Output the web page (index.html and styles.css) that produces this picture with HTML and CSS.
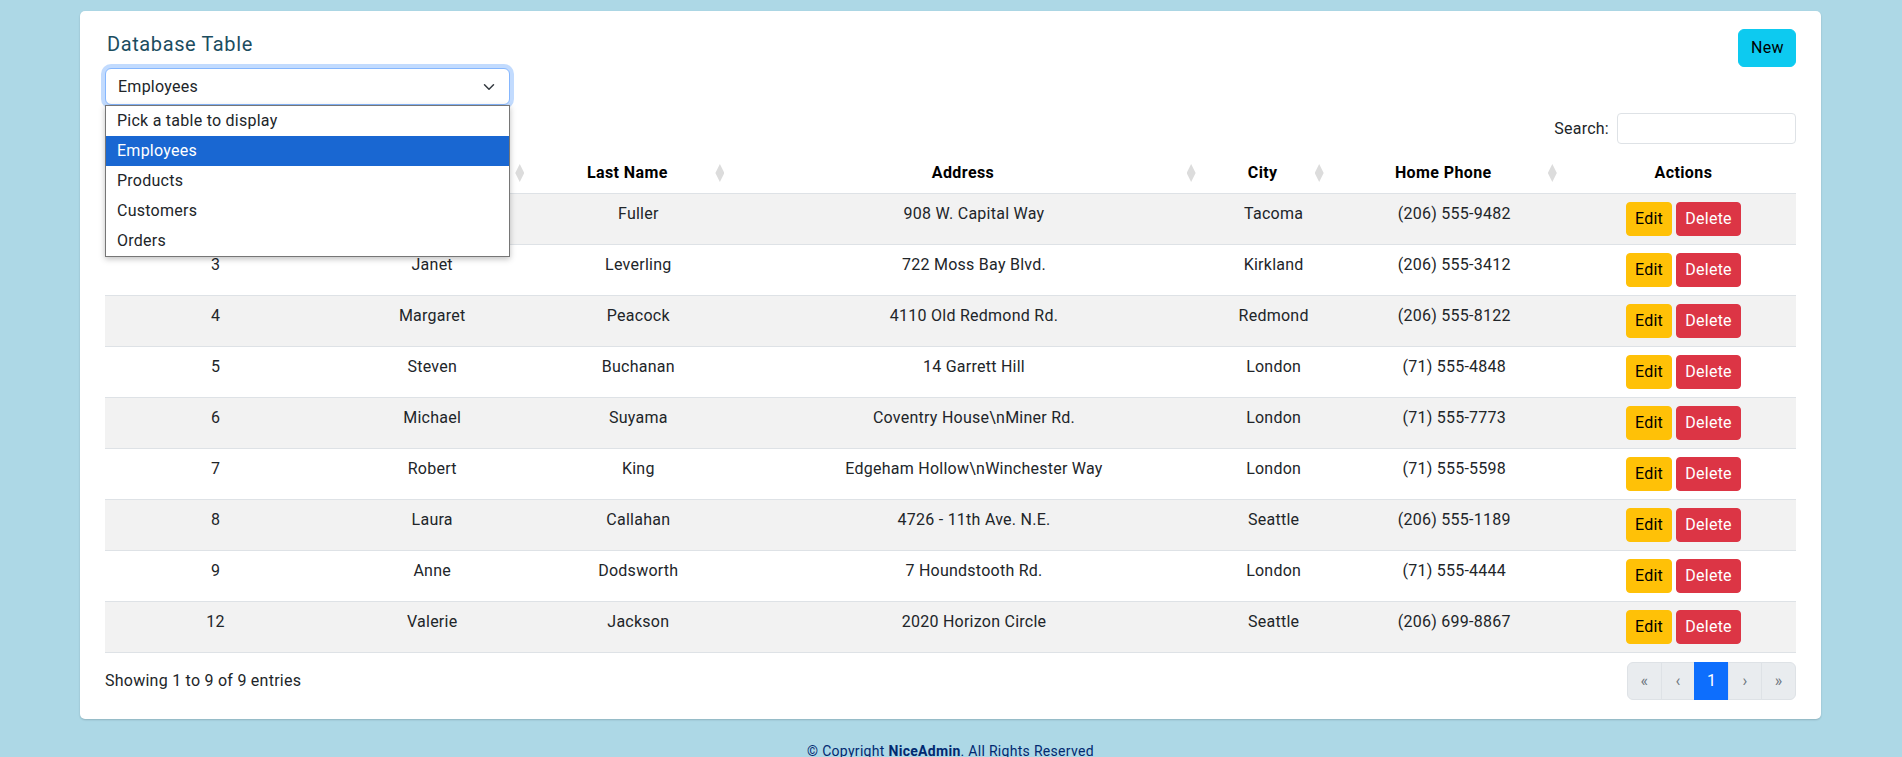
FILE: index.html
```html
<!DOCTYPE html>
<html lang="en">
<head>
<meta charset="utf-8">
<title>Database Table</title>
<link rel="stylesheet" href="styles.css">
</head>
<body>
<main class="main">
  <section class="card">
    <div class="card-head">
      <div class="head-left">
        <h5 class="card-title">Database Table</h5>
        <div class="picker">
          <div class="select">
            <span>Employees</span>
            <svg class="chev" width="16" height="12" viewBox="0 0 16 16"><path d="m2 5 6 6 6-6" fill="none" stroke="#343a40" stroke-width="2" stroke-linecap="round" stroke-linejoin="round"/></svg>
          </div>
          <ul class="options">
            <li>Pick a table to display</li>
            <li class="selected">Employees</li>
            <li>Products</li>
            <li>Customers</li>
            <li>Orders</li>
          </ul>
        </div>
      </div>
      <button class="btn btn-info">New</button>
    </div>

    <div class="dt-top">
      <label class="search-label">Search:</label>
      <input class="search-input" type="search">
    </div>

    <table class="table">
      <colgroup>
        <col class="c1"><col class="c2"><col class="c3"><col class="c4"><col class="c5"><col class="c6"><col class="c7">
      </colgroup>
      <thead>
        <tr>
          <th class="sortable">ID<span class="sort"></span></th>
          <th class="sortable">First Name<span class="sort"></span></th>
          <th class="sortable">Last Name<span class="sort"></span></th>
          <th class="sortable">Address<span class="sort"></span></th>
          <th class="sortable">City<span class="sort"></span></th>
          <th class="sortable">Home Phone<span class="sort"></span></th>
          <th>Actions</th>
        </tr>
      </thead>
      <tbody>
        <tr><td>2</td><td>Andrew</td><td>Fuller</td><td>908 W. Capital Way</td><td>Tacoma</td><td>(206) 555-9482</td><td class="actions"><button class="btn btn-warning">Edit</button> <button class="btn btn-danger">Delete</button></td></tr>
        <tr><td>3</td><td>Janet</td><td>Leverling</td><td>722 Moss Bay Blvd.</td><td>Kirkland</td><td>(206) 555-3412</td><td class="actions"><button class="btn btn-warning">Edit</button> <button class="btn btn-danger">Delete</button></td></tr>
        <tr><td>4</td><td>Margaret</td><td>Peacock</td><td>4110 Old Redmond Rd.</td><td>Redmond</td><td>(206) 555-8122</td><td class="actions"><button class="btn btn-warning">Edit</button> <button class="btn btn-danger">Delete</button></td></tr>
        <tr><td>5</td><td>Steven</td><td>Buchanan</td><td>14 Garrett Hill</td><td>London</td><td>(71) 555-4848</td><td class="actions"><button class="btn btn-warning">Edit</button> <button class="btn btn-danger">Delete</button></td></tr>
        <tr><td>6</td><td>Michael</td><td>Suyama</td><td>Coventry House\nMiner Rd.</td><td>London</td><td>(71) 555-7773</td><td class="actions"><button class="btn btn-warning">Edit</button> <button class="btn btn-danger">Delete</button></td></tr>
        <tr><td>7</td><td>Robert</td><td>King</td><td>Edgeham Hollow\nWinchester Way</td><td>London</td><td>(71) 555-5598</td><td class="actions"><button class="btn btn-warning">Edit</button> <button class="btn btn-danger">Delete</button></td></tr>
        <tr><td>8</td><td>Laura</td><td>Callahan</td><td>4726 - 11th Ave. N.E.</td><td>Seattle</td><td>(206) 555-1189</td><td class="actions"><button class="btn btn-warning">Edit</button> <button class="btn btn-danger">Delete</button></td></tr>
        <tr><td>9</td><td>Anne</td><td>Dodsworth</td><td>7 Houndstooth Rd.</td><td>London</td><td>(71) 555-4444</td><td class="actions"><button class="btn btn-warning">Edit</button> <button class="btn btn-danger">Delete</button></td></tr>
        <tr><td>12</td><td>Valerie</td><td>Jackson</td><td>2020 Horizon Circle</td><td>Seattle</td><td>(206) 699-8867</td><td class="actions"><button class="btn btn-warning">Edit</button> <button class="btn btn-danger">Delete</button></td></tr>
      </tbody>
    </table>

    <div class="dt-bottom">
      <div class="info">Showing 1 to 9 of 9 entries</div>
      <ul class="pagination">
        <li class="pg disabled">«</li>
        <li class="pg disabled">‹</li>
        <li class="pg active">1</li>
        <li class="pg disabled">›</li>
        <li class="pg disabled">»</li>
      </ul>
    </div>
  </section>

  <footer class="footer">© Copyright <strong>NiceAdmin</strong>. All Rights Reserved</footer>
</main>
</body>
</html>
```

FILE: styles.css
```css
* { box-sizing: border-box; }

html, body {
  margin: 0;
  background: #add8e6;
  font-family: Roboto, "Liberation Sans", Arial, sans-serif;
  font-size: 16px;
  line-height: 1.5;
  letter-spacing: 0.25px;
  color: #212529;
}

.main {
  padding: 11px 81px 0 80px;
}

.card {
  background: #fff;
  border-radius: 5px;
  box-shadow: 0 1px 2px rgba(0, 0, 0, 0.18);
  padding: 18px 25px 19px 25px;
}

.card-head {
  display: flex;
  justify-content: space-between;
  align-items: flex-start;
}

.head-left {
  display: flex;
  flex-direction: column;
}

.card-title {
  margin: 0;
  padding: 3px 0 0 2px;
  font-size: 20px;
  font-weight: 400;
  line-height: 24px;
  letter-spacing: 0.6px;
  color: #1c4d5f;
}

.picker {
  position: relative;
  margin-top: 12px;
  width: 405px;
}

.select {
  display: flex;
  align-items: center;
  justify-content: space-between;
  height: 37px;
  padding: 0 12px;
  border: 1px solid #86b7fe;
  border-radius: 6px;
  box-shadow: 0 0 0 4px rgba(13, 110, 253, 0.25);
  background: #fff;
  font-size: 16px;
}

.chev { display: block; }

.options {
  position: absolute;
  top: 100%;
  left: 0;
  width: 405px;
  margin: 0;
  padding: 0;
  list-style: none;
  background: #fff;
  border: 1px solid #767676;
  box-shadow: 0 2px 6px rgba(0, 0, 0, 0.25);
  z-index: 10;
}

.options li {
  height: 30px;
  line-height: 30px;
  padding: 0 11px;
  font-size: 16px;
  color: #212529;
}

.options li.selected {
  background: #1967d2;
  color: #fff;
}

.btn {
  font-family: inherit;
  font-size: 16px;
  line-height: 24px;
  letter-spacing: 0.25px;
  border: 1px solid transparent;
  cursor: pointer;
}

.btn-info {
  background: #0dcaf0;
  border-color: #0dcaf0;
  color: #000;
  padding: 6px 12px;
  border-radius: 6px;
  height: 38px;
  width: 58px;
}

.dt-top {
  display: flex;
  justify-content: flex-end;
  align-items: center;
  gap: 8px;
  margin-top: 8px;
}

.search-label {
  font-size: 16px;
  color: #212529;
}

.search-input {
  width: 179px;
  height: 31px;
  border: 1px solid #dee2e6;
  border-radius: 4px;
  padding: 4px 8px;
  font-family: inherit;
  font-size: 14px;
}

.table {
  width: 100%;
  margin-top: 9px;
  border-collapse: collapse;
  table-layout: fixed;
}

.c1 { width: 221px; }
.c2 { width: 212px; }
.c3 { width: 200px; }
.c4 { width: 471px; }
.c5 { width: 128px; }
.c6 { width: 233px; }
.c7 { width: 225px; }

.table th,
.table td {
  text-align: center;
  vertical-align: top;
  padding: 8px;
  line-height: 24px;
  border-bottom: 1px solid #dee2e6;
  white-space: nowrap;
}

.table th {
  font-weight: 700;
  letter-spacing: 0.4px;
  color: #000;
}

.table th.sortable {
  position: relative;
  padding-right: 30px;
}

.sort {
  position: absolute;
  right: 14px;
  top: 11px;
  width: 9px;
  height: 18px;
  background: #dcdcdc;
  clip-path: polygon(50% 0, 100% 50%, 50% 100%, 0 50%);
}

.table tbody tr:nth-child(odd) td {
  background: #f2f2f2;
}

.table td {
  color: #212529;
}

.actions .btn {
  display: inline-block;
  vertical-align: top;
  height: 34px;
  padding: 4px 8px;
  border-radius: 4px;
}

.btn-warning {
  background: #ffc107;
  border-color: #ffc107;
  color: #000;
}

.btn-danger {
  background: #dc3545;
  border-color: #dc3545;
  color: #fff;
}

.dt-bottom {
  display: flex;
  justify-content: space-between;
  align-items: center;
  margin-top: 9px;
}

.info {
  font-size: 16px;
  color: #212529;
}

.pagination {
  display: flex;
  margin: 0;
  padding: 0;
  list-style: none;
}

.pg {
  width: 34.6px;
  height: 38px;
  line-height: 36px;
  text-align: center;
  border: 1px solid #dee2e6;
  margin-left: -1px;
  font-size: 16px;
}

.pg:first-child {
  margin-left: 0;
  border-radius: 6px 0 0 6px;
}

.pg:last-child {
  border-radius: 0 6px 6px 0;
}

.pg.disabled {
  background: #e9ecef;
  color: #6c757d;
}

.pg.active {
  background: #0d6efd;
  border-color: #0d6efd;
  color: #fff;
}

.footer {
  padding-top: 22px;
  text-align: center;
  font-size: 14px;
  line-height: 21px;
  letter-spacing: 0.3px;
  color: #012970;
}

.footer strong {
  font-weight: 700;
}
```
